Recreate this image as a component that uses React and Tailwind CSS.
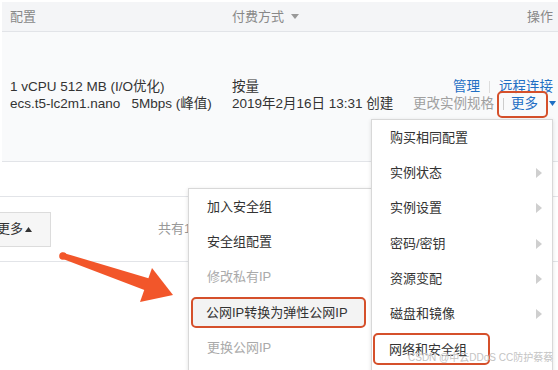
import React from "react";

const font = { fontFamily: '"Liberation Sans", "Noto Sans CJK SC", sans-serif' };

function Chevron() {
  return (
    <svg width="6" height="10" viewBox="0 0 6 10" className="absolute right-[10px] top-1/2 -translate-y-1/2">
      <path d="M0 0 L6 5 L0 10 Z" fill="#cfcfcf" />
    </svg>
  );
}

function MenuItem({ children, arrow, muted }) {
  return (
    <div className={`relative h-[35.3px] flex items-center pl-[18px] ${muted ? "text-[#aaa]" : "text-[#333]"}`}>
      {children}
      {arrow && <Chevron />}
    </div>
  );
}

export default function App() {
  return (
    <div className="relative w-[558px] h-[370px] overflow-hidden bg-white text-[13px]" style={font}>
      <div className="pt-[2px] pl-[2px]">
        {/* header */}
        <div className="h-[30px] bg-[#f4f5f7] border-b border-[#e2e4e8] flex items-center text-[#888]">
          <div className="w-[230px] pl-[8px]">配置</div>
          <div className="flex-1 flex items-center gap-[7px]">
            付费方式
            <svg width="8" height="5" viewBox="0 0 8 5"><path d="M0 0 H8 L4 5 Z" fill="#999" /></svg>
          </div>
          <div className="pr-[5px]">操作</div>
        </div>
        {/* row */}
        <div className="h-[130px] bg-[#f9fafb] border-b border-[#e2e4e8] flex pt-[46px] leading-[17px] text-[#333] text-[13.5px]">
          <div className="w-[230px] pl-[8px]">
            <div>1 vCPU 512 MB (I/O优化)</div>
            <div className="whitespace-pre">ecs.t5-lc2m1.nano   5Mbps (峰值)</div>
          </div>
          <div className="flex-1">
            <div>按量</div>
            <div>2019年2月16日 13:31 创建</div>
          </div>
          <div className="pr-[2px] flex flex-col items-end">
            <div className="mr-[3px] flex items-center text-[#1f6fc4]">
              管理<span className="mx-[9px] w-px h-[12px] bg-[#ddd]" />远程连接
            </div>
            <div className="flex items-center">
              <span className="text-[#a0a0a0]">更改实例规格</span>
              <span className="ml-[9px] mr-[7px] w-px h-[12px] bg-[#ccc]" />
              <span className="text-[#1f6fc4]">更多</span>
              <svg className="ml-[11px]" width="7" height="5" viewBox="0 0 7 5"><path d="M0 0 H7 L3.5 5 Z" fill="#1f6fc4" /></svg>
            </div>
          </div>
        </div>
      </div>
      {/* footer */}
      <div className="mt-[34px] h-[66px] border-t border-b border-[#e2e4e8] flex items-center">
        <div className="w-[51px] h-[35px] bg-[#f6f6f6] border border-l-0 border-[#dcdcdc] flex items-center text-[#333] overflow-hidden">
          <span className="ml-[-3px] whitespace-nowrap">更多</span>
          <svg className="ml-[2px]" width="7" height="5" viewBox="0 0 7 5"><path d="M0 5 H7 L3.5 0 Z" fill="#333" /></svg>
        </div>
        <div className="ml-[107px] text-[#999]">共有1条</div>
      </div>

      {/* 更多 highlight */}
      <div className="absolute left-[497px] top-[91px] w-[51px] h-[27px] rounded-[5px] border-[2.5px] border-[#d5502b]" />

      {/* submenu */}
      <div className="absolute left-[188px] top-[188px] w-[184px] h-[200px] bg-white border border-[#d8d8d8] shadow-[0_1px_4px_rgba(0,0,0,0.12)]">
        <MenuItem>加入安全组</MenuItem>
        <MenuItem>安全组配置</MenuItem>
        <MenuItem muted>修改私有IP</MenuItem>
        <div className="h-[35.3px] flex items-center">
          <div className="ml-[2px] mr-[5px] flex-1 h-[31px] rounded-[5px] border-[2.5px] border-[#d5502b] bg-[#f3f3f3] flex items-center pl-[13px] text-[#333]">
            公网IP转换为弹性公网IP
          </div>
        </div>
        <MenuItem muted>更换公网IP</MenuItem>
      </div>

      {/* main menu */}
      <div className="absolute left-[371px] top-[119px] w-[182px] h-[270px] bg-white border border-[#d8d8d8] shadow-[0_1px_4px_rgba(0,0,0,0.12)]">
        <MenuItem>购买相同配置</MenuItem>
        <MenuItem arrow>实例状态</MenuItem>
        <MenuItem arrow>实例设置</MenuItem>
        <MenuItem arrow>密码/密钥</MenuItem>
        <MenuItem arrow>资源变配</MenuItem>
        <MenuItem arrow>磁盘和镜像</MenuItem>
        <div className="h-[35.3px] flex items-center">
          <div className="ml-[1px] w-[117px] h-[32px] rounded-[5px] border-[2.5px] border-[#d5502b] flex items-center pl-[14px] text-[#333]">
            网络和安全组
          </div>
        </div>
      </div>

      {/* arrow */}
      <svg className="absolute left-0 top-0 pointer-events-none" width="558" height="370" viewBox="0 0 558 370">
        <polygon points="61.7,252.4 64.3,259.6 147,291 151,279" fill="#f2562a" />
        <circle cx="63" cy="256" r="3.8" fill="#f2562a" />
        <polygon points="152,268 173,295 140,302" fill="#f2562a" />
      </svg>

      {/* watermark */}
      <div className="absolute left-[408px] top-[350px] text-[10px] text-[#c4c4c4] whitespace-nowrap" style={{ textShadow: "0 0 1px #fff" }}>
        CSDN @中云DDoS CC防护蔡蔡
      </div>
    </div>
  );
}
